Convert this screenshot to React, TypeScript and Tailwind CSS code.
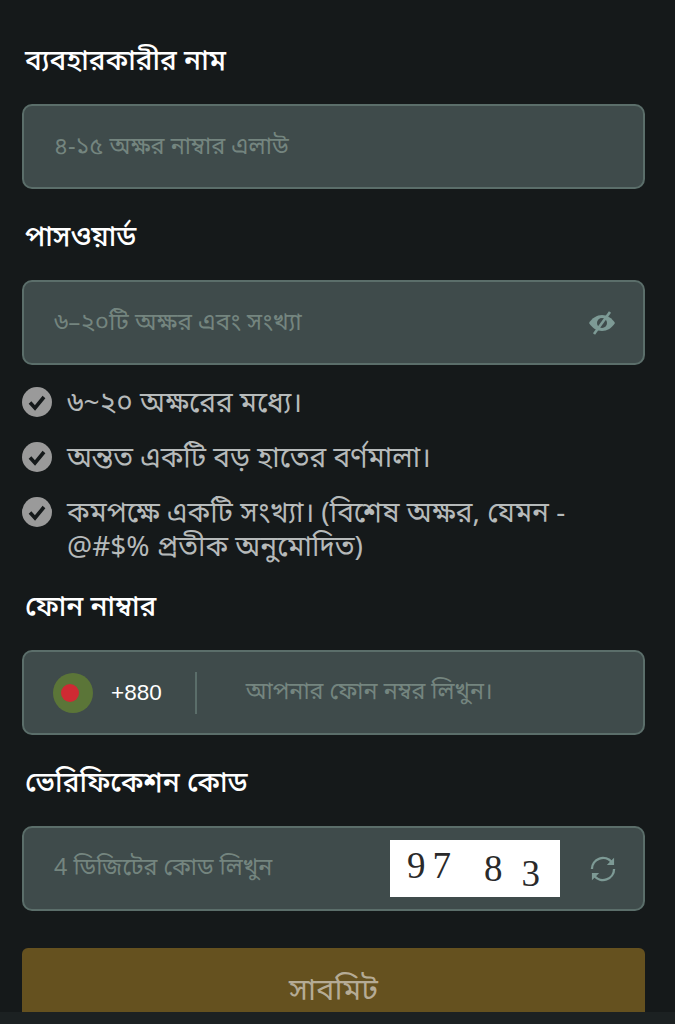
import React from 'react';

const font = { fontFamily: '"Noto Sans Bengali", "Noto Sans", "Liberation Sans", sans-serif' };

const labelClass = "text-[28px] leading-[44px] font-medium text-white pl-[3px]";
const boxClass = "h-[85px] border-2 border-[#5b6e6a] bg-[#3f4b4b] rounded-[10px] flex items-center mt-[19px]";

const CheckIcon = () => (
  <svg width="30" height="30" viewBox="0 0 30 30" className="shrink-0 mt-[2px]">
    <circle cx="15" cy="15" r="15" fill="#9a9a9a" />
    <path d="M8 15.5l5 5.5 9-11" fill="none" stroke="#15191a" strokeWidth="3.6" />
  </svg>
);

const rules = [
  '৬~২০ অক্ষরের মধ্যে।',
  'অন্তত একটি বড় হাতের বর্ণমালা।',
  'কমপক্ষে একটি সংখ্যা। (বিশেষ অক্ষর, যেমন - @#$% প্রতীক অনুমোদিত)',
];

export default function App() {
  return (
    <div style={font} className="w-[675px] h-[1024px] overflow-hidden bg-[#15191a] relative">
      <div className="pl-[22px] pr-[30px] pt-[41px]">
        <div className={labelClass}>ব্যবহারকারীর নাম</div>
        <div className={boxClass + " px-[30px]"}>
          <span className="text-[23.5px] text-[#74857f] pt-[4px]">৪-১৫ অক্ষর নাম্বার এলাউ</span>
        </div>

        <div className={labelClass + " mt-[28px]"}>পাসওয়ার্ড</div>
        <div className={boxClass + " pl-[30px] pr-[27px] justify-between"}>
          <span className="text-[24.2px] text-[#74857f] pt-[4px]">৬–২০টি অক্ষর এবং সংখ্যা</span>
          <svg width="28" height="24" viewBox="0 0 28 24">
            <path d="M1 12c3-5 8-8 13-8s10 3 13 8c-3 5-8 8-13 8S4 17 1 12z" fill="#7d9a95" />
            <circle cx="14" cy="12" r="5" fill="#3f4b4b" />
            <path d="M6 23L22 1" stroke="#7d9a95" strokeWidth="2.6" />
          </svg>
        </div>

        <div className="mt-[20px] flex flex-col gap-[18px]">
          {rules.map((r) => (
            <div key={r} className="flex items-start gap-[15px]">
              <CheckIcon />
              <span className="text-[28px] leading-[34px] text-[#b6baba] mt-[3px]">{r}</span>
            </div>
          ))}
        </div>

        <div className={labelClass + " mt-[21px]"}>ফোন নাম্বার</div>
        <div className={boxClass + " pl-[29px]"}>
          <div className="w-[40px] h-[40px] rounded-full bg-[#5b7538] flex items-center justify-center pr-[6px]">
            <div className="w-[18px] h-[18px] rounded-full bg-[#cf2a33]" />
          </div>
          <span className="ml-[18px] text-[22.5px] text-white font-['Liberation_Sans',sans-serif]">+880</span>
          <div className="w-[2px] h-[42px] bg-[#5b6e6a] ml-[33px]" />
          <span className="text-[23.3px] text-[#74857f] ml-[49px] pt-[4px]">আপনার ফোন নম্বর লিখুন।</span>
        </div>

        <div className={labelClass + " mt-[28px]"}>ভেরিফিকেশন কোড</div>
        <div className={boxClass + " pl-[30px] pr-[26px]"}>
          <span className="text-[23.3px] text-[#74857f] flex-1 pt-[4px]">4 ডিজিটের কোড লিখুন</span>
          <div className="w-[170px] h-[57px] bg-white flex items-center text-[#2a2a2a] text-[37px] pl-[17px] font-['Liberation_Serif',serif]">
            <span className="-mt-[6px]">9</span>
            <span className="ml-[7px] -mt-[6px]">7</span>
            <span className="ml-[33px]">8</span>
            <span className="ml-[19px] mt-[10px]">3</span>
          </div>
          <svg width="28" height="28" viewBox="0 0 24 24" className="ml-[29px]" fill="none" stroke="#7d9a95" strokeWidth="2">
            <path d="M2.5 12a9.5 9.5 0 0 1 17-5.8" />
            <path d="M21.5 12a9.5 9.5 0 0 1-17 5.8" />
            <path d="M21 3.5v4.5h-4.5z" fill="#7d9a95" strokeWidth="1" />
            <path d="M3 20.5v-4.5h4.5z" fill="#7d9a95" strokeWidth="1" />
          </svg>
        </div>

        <div className="mt-[37px] h-[85px] bg-[#65511f] rounded-t-[6px] flex items-center justify-center text-[30.5px] text-[#b5ab95] pt-[4px]">
          সাবমিট
        </div>
      </div>
      <div className="absolute bottom-0 left-0 right-0 h-[12px] bg-[#1c2122]" />
    </div>
  );
}
